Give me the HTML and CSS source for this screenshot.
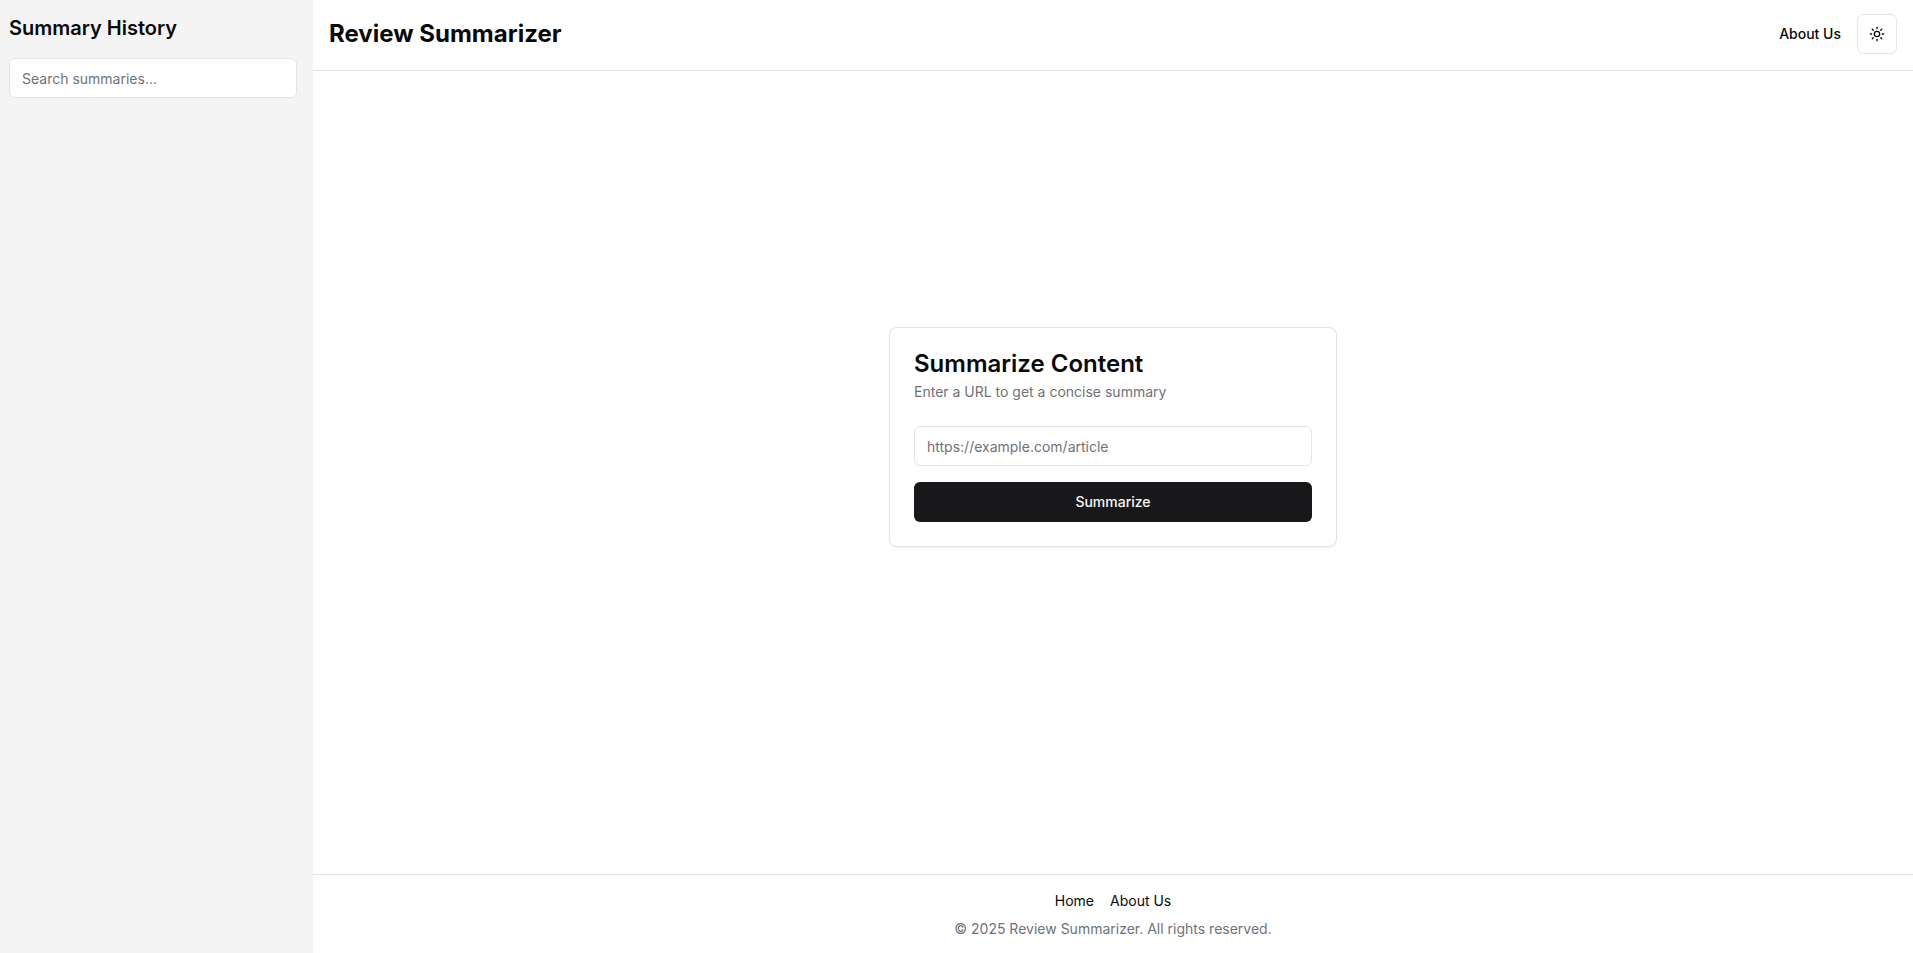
FILE: index.html
```html
<!DOCTYPE html>
<html lang="en">
<head>
<meta charset="utf-8">
<meta name="viewport" content="width=device-width, initial-scale=1">
<title>Review Summarizer</title>
<link rel="stylesheet" href="styles.css">
</head>
<body>
<div class="app">
  <aside class="sidebar">
    <h2 class="sidebar-title">Summary History</h2>
    <input class="input" type="text" placeholder="Search summaries..." aria-label="Search summaries">
  </aside>
  <div class="page">
    <header class="header">
      <h1 class="brand">Review Summarizer</h1>
      <nav class="header-nav">
        <a class="nav-link" href="#about">About Us</a>
        <button class="theme-toggle" type="button" aria-label="Toggle theme">
          <svg class="icon" viewBox="0 0 24 24" fill="none" stroke="currentColor" stroke-width="2" stroke-linecap="round" stroke-linejoin="round" aria-hidden="true">
            <circle cx="12" cy="12" r="4"/>
            <path d="M12 2v2M12 20v2M4.93 4.93l1.41 1.41M17.66 17.66l1.41 1.41M2 12h2M20 12h2M6.34 17.66l-1.41 1.41M19.07 4.93l-1.41 1.41"/>
          </svg>
        </button>
      </nav>
    </header>
    <main class="main">
      <section class="card">
        <div class="card-header">
          <h2 class="card-title">Summarize Content</h2>
          <p class="muted">Enter a URL to get a concise summary</p>
        </div>
        <form class="form">
          <input class="input" type="url" placeholder="https://example.com/article" aria-label="Article URL">
          <button class="submit" type="submit">Summarize</button>
        </form>
      </section>
    </main>
    <footer class="footer">
      <nav class="footer-nav">
        <a href="#home">Home</a>
        <a href="#about">About Us</a>
      </nav>
      <p class="muted">© 2025 Review Summarizer. All rights reserved.</p>
    </footer>
  </div>
</div>
</body>
</html>
```
FILE: styles.css
```css
*,
*::before,
*::after {
  box-sizing: border-box;
}

body {
  margin: 0;
  background: #ffffff;
  color: #09090b;
  font-family: Inter, "Liberation Sans", sans-serif;
  font-size: 14px;
  line-height: 20px;
}

h1,
h2,
p {
  margin: 0;
}

a {
  color: inherit;
  text-decoration: none;
}

.app {
  display: flex;
  min-height: 100vh;
}

.sidebar {
  flex: 0 0 313px;
  padding: 14px 16px 16px 9px;
  background: #f4f4f4;
}

.sidebar-title {
  margin-bottom: 16px;
  font-size: 20px;
  font-weight: 600;
  line-height: 28px;
}

.input {
  display: block;
  width: 100%;
  height: 40px;
  padding: 8px 12px;
  border: 1px solid #e4e4e7;
  border-radius: 6px;
  background: #ffffff;
  color: inherit;
  font: inherit;
}

.input::placeholder {
  color: #71717a;
  opacity: 1;
}

.page {
  display: flex;
  flex: 1;
  flex-direction: column;
  min-width: 0;
}

.header {
  display: flex;
  align-items: center;
  justify-content: space-between;
  padding: 14px 16px 16px;
  border-bottom: 1px solid #e4e4e7;
}

.brand {
  font-size: 24px;
  font-weight: 700;
  line-height: 32px;
}

.header-nav {
  display: flex;
  align-items: center;
  gap: 16px;
}

.nav-link {
  font-weight: 500;
}

.theme-toggle {
  display: flex;
  align-items: center;
  justify-content: center;
  width: 40px;
  height: 40px;
  padding: 0;
  border: 1px solid #e4e4e7;
  border-radius: 6px;
  background: #ffffff;
  color: inherit;
}

.icon {
  width: 16px;
  height: 16px;
}

.main {
  display: flex;
  flex: 1;
  align-items: center;
  justify-content: center;
  padding: 0 16px 71px;
}

.card {
  width: 100%;
  max-width: 448px;
  padding: 24px;
  border: 1px solid #e4e4e7;
  border-radius: 8px;
  background: #ffffff;
  box-shadow: 0 1px 2px rgba(0, 0, 0, 0.05);
}

.card-header {
  display: grid;
  gap: 6px;
  margin-bottom: 24px;
}

.card-title {
  font-size: 24px;
  font-weight: 600;
  line-height: 24px;
}

.muted {
  color: #71717a;
}

.form {
  display: grid;
  gap: 16px;
}

.submit {
  height: 40px;
  padding: 8px 16px;
  border: 0;
  border-radius: 6px;
  background: #18181b;
  color: #fafafa;
  font: inherit;
  font-weight: 500;
}

.footer {
  display: flex;
  flex-direction: column;
  align-items: center;
  gap: 8px;
  padding: 16px 16px 14px;
  border-top: 1px solid #e4e4e7;
}

.footer-nav {
  display: flex;
  gap: 16px;
}
```
